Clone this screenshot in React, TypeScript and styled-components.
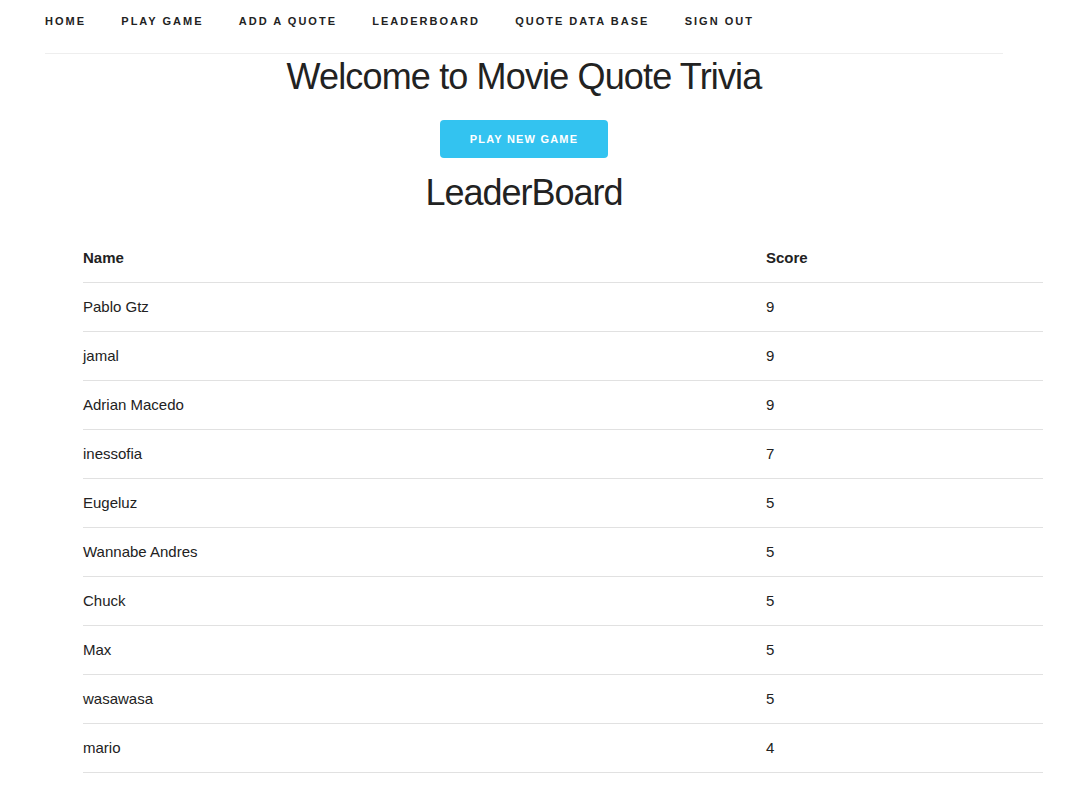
import React from "react";
import styled, { createGlobalStyle } from "styled-components";

const Global = createGlobalStyle`
  html, body { margin: 0; padding: 0; background: #fff; }
  body {
    font-family: "Liberation Sans", Arial, Helvetica, sans-serif;
    color: #222;
  }
`;

const Page = styled.div`
  width: 958px;
  margin-left: 45px;
  display: flex;
  flex-direction: column;
`;

const Nav = styled.nav`
  height: 53px;
  border-bottom: 1px solid #eee;
  display: flex;
  align-items: flex-start;
`;

const NavList = styled.ul`
  list-style: none;
  margin: 0;
  padding: 0;
  display: flex;
  height: 42px;
  align-items: center;
`;

const NavItem = styled.li`
  margin-right: 35.3px;
  font-size: 11px;
  font-weight: 700;
  letter-spacing: 2px;
  text-transform: uppercase;
  color: #222;
  line-height: 1;
`;

const Title = styled.h1<{ $spacing: number }>`
  margin: 0;
  font-weight: 400;
  font-size: 36px;
  line-height: 45px;
  letter-spacing: ${(p) => p.$spacing}px;
  text-align: center;
  color: #222;
`;

const Welcome = styled(Title)`
  margin-top: 0;
`;

const Board = styled(Title)`
  margin-top: 12px;
`;

const ButtonRow = styled.div`
  display: flex;
  justify-content: center;
  margin-top: 21px;
`;

const PrimaryButton = styled.button`
  height: 38px;
  padding: 0 30px;
  border: none;
  border-radius: 4px;
  background: #33c3f0;
  color: #fff;
  font-family: inherit;
  font-size: 11px;
  font-weight: 700;
  letter-spacing: 1.2px;
  text-transform: uppercase;
  cursor: pointer;
`;

const Table = styled.table`
  width: 960px;
  margin: 19px 0 0 83px;
  border-collapse: collapse;
  font-size: 15px;
  line-height: 24px;
`;

const Th = styled.th<{ $first?: boolean }>`
  text-align: left;
  font-weight: 700;
  padding: 12px ${(p) => (p.$first ? "15px" : "0")} 12px ${(p) => (p.$first ? "0" : "15px")};
  border-bottom: 1px solid #e1e1e1;
  width: ${(p) => (p.$first ? "653px" : "auto")};
`;

const Td = styled.td<{ $first?: boolean }>`
  padding: 12px ${(p) => (p.$first ? "15px" : "0")} 12px ${(p) => (p.$first ? "0" : "15px")};
  border-bottom: 1px solid #e1e1e1;
`;

const navItems = ["Home", "Play Game", "Add a Quote", "Leaderboard", "Quote Data Base", "Sign Out"];

const rows: [string, number][] = [
  ["Pablo Gtz", 9],
  ["jamal", 9],
  ["Adrian Macedo", 9],
  ["inessofia", 7],
  ["Eugeluz", 5],
  ["Wannabe Andres", 5],
  ["Chuck", 5],
  ["Max", 5],
  ["wasawasa", 5],
  ["mario", 4],
];

export default function App() {
  return (
    <>
      <Global />
      <Page>
        <Nav>
          <NavList>
            {navItems.map((n) => (
              <NavItem key={n}>{n}</NavItem>
            ))}
          </NavList>
        </Nav>
        <Welcome $spacing={-0.85}>Welcome to Movie Quote Trivia</Welcome>
        <ButtonRow>
          <PrimaryButton>Play New Game</PrimaryButton>
        </ButtonRow>
        <Board $spacing={-1}>LeaderBoard</Board>
      </Page>
      <Table>
        <thead>
          <tr>
            <Th $first>Name</Th>
            <Th>Score</Th>
          </tr>
        </thead>
        <tbody>
          {rows.map(([name, score]) => (
            <tr key={name}>
              <Td $first>{name}</Td>
              <Td>{score}</Td>
            </tr>
          ))}
        </tbody>
      </Table>
    </>
  );
}
